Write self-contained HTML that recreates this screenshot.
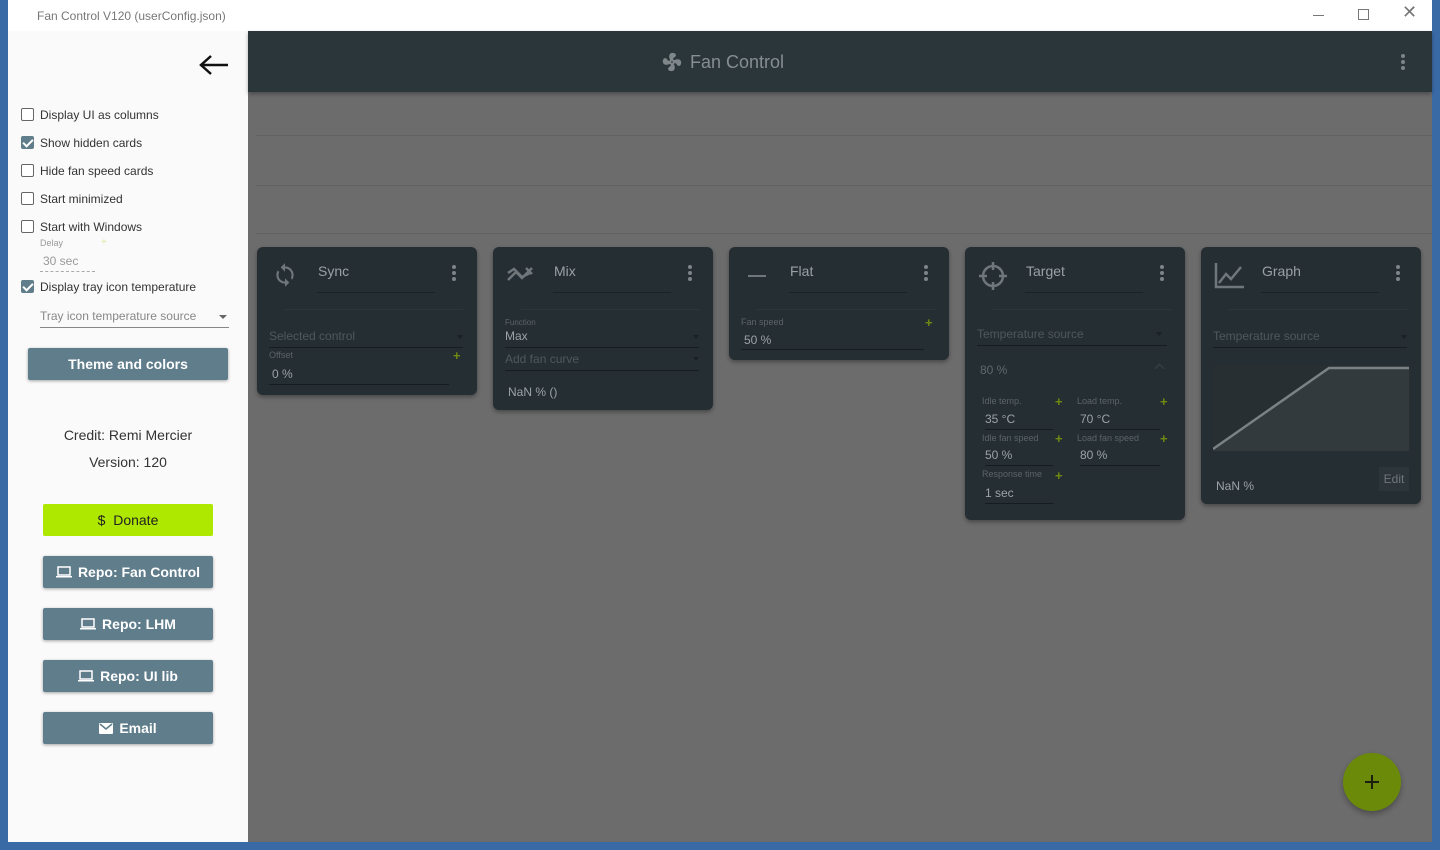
<!DOCTYPE html>
<html><head><meta charset="utf-8"><style>
*{box-sizing:border-box;margin:0;padding:0}
body{width:1440px;height:850px;overflow:hidden;background:#3a6aa6;font-family:"Liberation Sans",Arial,sans-serif;position:relative}
.a{position:absolute}
#title{left:8px;top:0;width:1424px;height:31px;background:#fff;color:#777;font-size:12px}
#drawer{left:8px;top:31px;width:240px;height:811px;background:#fafafa;color:#333}
#main{left:248px;top:31px;width:1184px;height:811px;background:#6c6c6c}
#hdr{left:0;top:0;width:1184px;height:61px;background:#2b363b;box-shadow:0 2px 4px rgba(0,0,0,.3)}
.cb{position:absolute;left:13px;width:13px;height:13px;border:1.5px solid #666;border-radius:2px;background:#fff}
.cb.on{background:#607d8b;border-color:#607d8b}
.cb.on:after{content:"";position:absolute;left:3px;top:0px;width:4px;height:8px;border:solid #fff;border-width:0 2px 2px 0;transform:rotate(45deg)}
.lbl{position:absolute;left:32px;font-size:12px;color:#333}
.btn{position:absolute;background:#607d8b;color:#fff;font-weight:bold;font-size:14px;text-align:center;border-radius:2px;box-shadow:0 1px 3px rgba(0,0,0,.35);display:flex;align-items:center;justify-content:center;gap:6px}
.card{position:absolute;background:#252e32;border-radius:6px;box-shadow:0 2px 4px rgba(0,0,0,.35);color:#8b9397}
.ct{position:absolute;left:61px;top:16px;font-size:14px;color:#9aa1a4}
.tl{position:absolute;left:60px;top:45px;width:118px;border-top:1px solid #1c2326}
.sep{position:absolute;left:28px;right:14px;top:62px;border-top:1px solid #2d373b}
.dots{position:absolute;right:21px;top:18px;width:4px}
.dots i{display:block;width:4px;height:4px;border-radius:2px;background:#7d8589;margin-bottom:2px}
.sm{position:absolute;font-size:9px;color:#5c6468}
.v{position:absolute;font-size:12px;color:#9ca3a6}
.ul{position:absolute;border-top:1px solid #161c1f}
.pl{position:absolute;color:#6f8a10;font-size:13px;font-weight:bold}
.hint{position:absolute;font-size:12px;color:#4f585c}
.arr{position:absolute;width:0;height:0;border-left:3px solid transparent;border-right:3px solid transparent;border-top:4px solid #1a2023}
</style></head><body>
<div id="title" class="a"><span class="a" style="left:29px;top:9px">Fan Control V120 (userConfig.json)</span>
<span class="a" style="left:1305px;top:15px;width:11px;border-top:1px solid #777"></span>
<span class="a" style="left:1350px;top:9px;width:11px;height:11px;border:1px solid #777"></span>
<span class="a" style="left:1394px;top:2px;font-size:18px;color:#777">✕</span></div>

<div id="drawer" class="a">
<svg class="a" style="left:190px;top:22px" width="32" height="24" viewBox="0 0 32 24"><path d="M30 12H4M13 3L3 12l10 9" stroke="#111" stroke-width="2.5" fill="none"/></svg>
<div class="cb" style="top:77px"></div><div class="lbl" style="top:77px">Display UI as columns</div>
<div class="cb on" style="top:105px"></div><div class="lbl" style="top:105px">Show hidden cards</div>
<div class="cb" style="top:133px"></div><div class="lbl" style="top:133px">Hide fan speed cards</div>
<div class="cb" style="top:161px"></div><div class="lbl" style="top:161px">Start minimized</div>
<div class="cb" style="top:189px"></div><div class="lbl" style="top:189px">Start with Windows</div>
<div class="a" style="left:32px;top:207px;font-size:9px;color:#999">Delay</div>
<div class="a" style="left:93px;top:206px;font-size:10px;color:#dde8a0">+</div>
<div class="a" style="left:35px;top:223px;font-size:12px;color:#999">30 sec</div>
<div class="a" style="left:32px;top:240px;width:55px;border-top:1px dashed #aaa"></div>
<div class="cb on" style="top:249px"></div><div class="lbl" style="top:249px">Display tray icon temperature</div>
<div class="a" style="left:32px;top:278px;font-size:12px;color:#888">Tray icon temperature source</div>
<div class="a" style="left:211px;top:284px;border-left:4px solid transparent;border-right:4px solid transparent;border-top:4px solid #666"></div>
<div class="a" style="left:32px;top:296px;width:189px;border-top:1px solid #888"></div>
<div class="btn" style="left:20px;top:317px;width:200px;height:32px">Theme and colors</div>
<div class="a" style="left:0;width:240px;top:396px;text-align:center;font-size:14px;color:#333">Credit: Remi Mercier</div>
<div class="a" style="left:0;width:240px;top:423px;text-align:center;font-size:14px;color:#333">Version: 120</div>
<div class="btn" style="left:35px;top:473px;width:170px;height:32px;background:#aee800;color:#222;font-weight:normal;box-shadow:none">$&nbsp; Donate</div>
<div class="btn" style="left:35px;top:525px;width:170px;height:32px"><svg width="16" height="12"><rect x="2" y="1" width="12" height="8" fill="none" stroke="#fff" stroke-width="1.5"/><rect x="0" y="10" width="16" height="1.5" fill="#fff"/></svg>Repo: Fan Control</div>
<div class="btn" style="left:35px;top:577px;width:170px;height:32px"><svg width="16" height="12"><rect x="2" y="1" width="12" height="8" fill="none" stroke="#fff" stroke-width="1.5"/><rect x="0" y="10" width="16" height="1.5" fill="#fff"/></svg>Repo: LHM</div>
<div class="btn" style="left:35px;top:629px;width:170px;height:32px"><svg width="16" height="12"><rect x="2" y="1" width="12" height="8" fill="none" stroke="#fff" stroke-width="1.5"/><rect x="0" y="10" width="16" height="1.5" fill="#fff"/></svg>Repo: UI lib</div>
<div class="btn" style="left:35px;top:681px;width:170px;height:32px"><svg width="14" height="11"><rect width="14" height="11" rx="1" fill="#fff"/><path d="M1 1l6 5 6-5" stroke="#607d8b" stroke-width="1.5" fill="none"/></svg>Email</div>
</div>

<div id="main" class="a">
<div id="hdr" class="a">
<svg class="a" style="left:413px;top:20px" width="22" height="22" viewBox="0 0 24 24"><path fill="#7f878a" d="M12 11a1 1 0 1 0 0 2 1 1 0 0 0 0-2M12.5 2C17 2 17.1 5.6 14.7 6.8c-1 .5-1.4 1.4-1.6 2.3.5.2.9.5 1.2.9 3.7-2 7.7-1.2 7.7 2.5 0 4.5-3.6 4.6-4.8 2.2-.5-1-1.4-1.4-2.3-1.6-.2.5-.5.9-.9 1.2 2 3.7 1.2 7.7-2.5 7.7-4.5 0-4.6-3.6-2.2-4.8 1-.5 1.4-1.4 1.6-2.3-.5-.2-.9-.5-1.2-.9C6 16 2 15.2 2 11.5 2 7 5.6 6.9 6.8 9.3c.5 1 1.4 1.4 2.3 1.6.2-.5.5-.9.9-1.2C8 6 8.8 2 12.5 2z"/></svg>
<div class="a" style="left:442px;top:21px;font-size:18px;color:#868e91">Fan Control</div>
<div class="dots" style="left:1153px;top:23px"><i></i><i></i><i></i></div>
</div>
<div class="a" style="left:8px;top:104px;width:1176px;border-top:1px solid #626262"></div>
<div class="a" style="left:8px;top:154px;width:1176px;border-top:1px solid #626262"></div>
<div class="a" style="left:8px;top:202px;width:1176px;border-top:1px solid #626262"></div>

<!-- Sync -->
<div class="card" style="left:9px;top:216px;width:220px;height:148px">
<svg class="a" style="left:15px;top:14px" width="26" height="28" viewBox="0 0 24 24"><path fill="#6f777a" d="M12 4V1L8 5l4 4V6c3.3 0 6 2.7 6 6 0 1-.25 2-.7 2.8l1.46 1.46A7.9 7.9 0 0 0 20 12c0-4.4-3.6-8-8-8zm0 14c-3.3 0-6-2.7-6-6 0-1 .25-2 .7-2.8L5.24 7.74A7.9 7.9 0 0 0 4 12c0 4.4 3.6 8 8 8v3l4-4-4-4v3z"/></svg>
<div class="ct">Sync</div><div class="tl"></div><div class="dots"><i></i><i></i><i></i></div><div class="sep"></div>
<div class="hint" style="left:12px;top:82px">Selected control</div><div class="arr" style="left:200px;top:88px"></div>
<div class="ul" style="left:12px;right:14px;top:100px"></div>
<div class="sm" style="left:12px;top:103px">Offset</div><div class="pl" style="left:196px;top:101px">+</div>
<div class="v" style="left:15px;top:120px">0 %</div><div class="ul" style="left:12px;width:180px;top:137px"></div>
</div>
<!-- Mix -->
<div class="card" style="left:245px;top:216px;width:220px;height:163px">
<svg class="a" style="left:13px;top:18px" width="28" height="20" viewBox="0 0 28 20"><path d="M2 15l8-8 6 6 10-10M2 8l6-4 8 8 8-4M20 3l6 6" stroke="#6f777a" stroke-width="2.5" fill="none"/></svg>
<div class="ct">Mix</div><div class="tl"></div><div class="dots"><i></i><i></i><i></i></div><div class="sep"></div>
<div class="sm" style="left:12px;top:71px;font-size:8px">Function</div>
<div class="v" style="left:12px;top:82px">Max</div><div class="arr" style="left:200px;top:88px"></div>
<div class="ul" style="left:12px;right:14px;top:100px"></div>
<div class="hint" style="left:12px;top:105px">Add fan curve</div><div class="arr" style="left:200px;top:110px"></div>
<div class="ul" style="left:12px;right:14px;top:123px"></div>
<div class="v" style="left:15px;top:138px">NaN % ()</div>
</div>
<!-- Flat -->
<div class="card" style="left:481px;top:216px;width:220px;height:113px">
<div class="a" style="left:19px;top:28px;width:18px;border-top:2px solid #6f777a"></div>
<div class="ct">Flat</div><div class="tl"></div><div class="dots"><i></i><i></i><i></i></div><div class="sep"></div>
<div class="sm" style="left:12px;top:70px">Fan speed</div><div class="pl" style="left:196px;top:68px">+</div>
<div class="v" style="left:15px;top:86px">50 %</div><div class="ul" style="left:12px;width:183px;top:102px"></div>
</div>
<!-- Target -->
<div class="card" style="left:717px;top:216px;width:220px;height:273px">
<svg class="a" style="left:13px;top:14px" width="30" height="30" viewBox="0 0 30 30"><circle cx="15" cy="15" r="10" stroke="#6f777a" stroke-width="2.5" fill="none"/><path d="M15 1v8M15 21v8M1 15h8M21 15h8" stroke="#6f777a" stroke-width="2.5"/></svg>
<div class="ct">Target</div><div class="tl"></div><div class="dots"><i></i><i></i><i></i></div><div class="sep"></div>
<div class="hint" style="left:12px;top:80px">Temperature source</div><div class="arr" style="left:191px;top:85px"></div>
<div class="ul" style="left:12px;width:190px;top:98px"></div>
<div class="hint" style="left:15px;top:116px;color:#5f686c">80 %</div>
<div class="a" style="left:191px;top:118px;width:7px;height:7px;border-left:1px solid #3b4448;border-top:1px solid #3b4448;transform:rotate(45deg)"></div>
<div class="sm" style="left:17px;top:149px">Idle temp.</div><div class="pl" style="left:90px;top:147px">+</div>
<div class="sm" style="left:112px;top:149px">Load temp.</div><div class="pl" style="left:195px;top:147px">+</div>
<div class="v" style="left:20px;top:165px">35 °C</div><div class="v" style="left:115px;top:165px">70 °C</div>
<div class="ul" style="left:20px;width:68px;top:182px"></div><div class="ul" style="left:115px;width:80px;top:182px"></div>
<div class="sm" style="left:17px;top:186px">Idle fan speed</div><div class="pl" style="left:90px;top:184px">+</div>
<div class="sm" style="left:112px;top:186px">Load fan speed</div><div class="pl" style="left:195px;top:184px">+</div>
<div class="v" style="left:20px;top:201px">50 %</div><div class="v" style="left:115px;top:201px">80 %</div>
<div class="ul" style="left:20px;width:68px;top:218px"></div><div class="ul" style="left:115px;width:80px;top:218px"></div>
<div class="sm" style="left:17px;top:222px">Response time</div><div class="pl" style="left:90px;top:221px">+</div>
<div class="v" style="left:20px;top:239px">1 sec</div><div class="ul" style="left:20px;width:68px;top:256px"></div>
</div>
<!-- Graph -->
<div class="card" style="left:953px;top:216px;width:220px;height:257px">
<svg class="a" style="left:13px;top:16px" width="30" height="26" viewBox="0 0 30 26"><path d="M2 0v24h28M5 20l7-9 5 5 10-12" stroke="#6f777a" stroke-width="2.5" fill="none"/></svg>
<div class="ct">Graph</div><div class="tl"></div><div class="dots"><i></i><i></i><i></i></div><div class="sep"></div>
<div class="hint" style="left:12px;top:82px">Temperature source</div><div class="arr" style="left:200px;top:88px"></div>
<div class="ul" style="left:12px;right:14px;top:100px"></div>
<svg class="a" style="left:12px;top:118px" width="198" height="86" viewBox="0 0 198 86"><rect x="0" y="0" width="198" height="86" fill="#282f33"/><path d="M0 84L116 3H196V86H0Z" fill="#323a3e"/><path d="M0 84L116 3H196" stroke="#7a8285" stroke-width="2.5" fill="none"/></svg>
<div class="v" style="left:15px;top:232px">NaN %</div>
<div class="a" style="left:178px;top:220px;width:30px;height:24px;background:#2c3539;color:#6f777a;font-size:12px;text-align:center;line-height:24px">Edit</div>
</div>
<div class="a" style="left:1095px;top:722px;width:58px;height:58px;border-radius:50%;background:#6b8a0a;box-shadow:0 3px 6px rgba(0,0,0,.3)">
<div class="a" style="left:22px;top:28px;width:14px;border-top:2px solid #1a1f12"></div>
<div class="a" style="left:28px;top:22px;height:14px;border-left:2px solid #1a1f12"></div></div>
</div>
</body></html>
